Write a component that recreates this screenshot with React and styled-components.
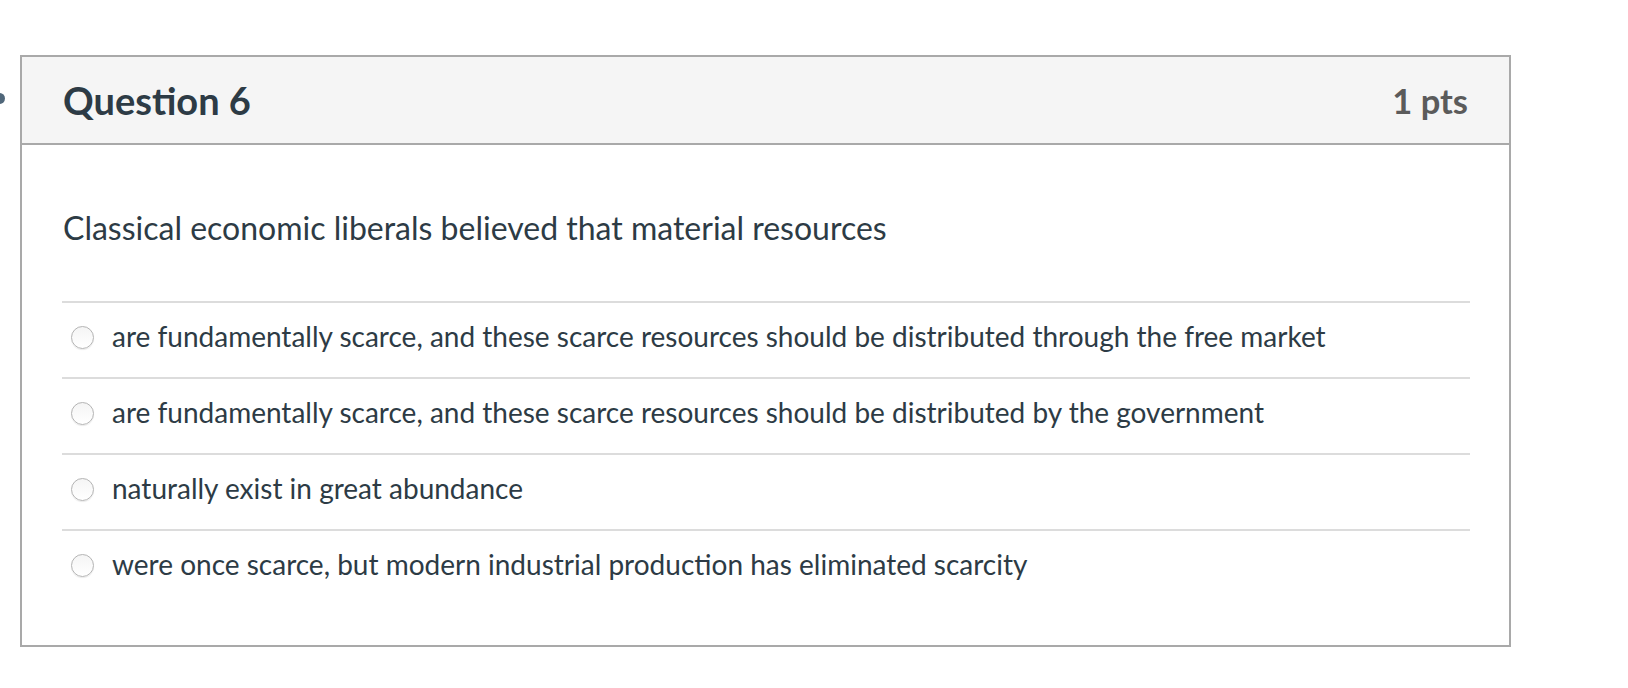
import React from 'react';
import styled, { createGlobalStyle } from 'styled-components';

const GlobalStyle = createGlobalStyle`
    body{
        margin: 0;
        background: #ffffff;
        font-family: Lato, "Open Sans", "Liberation Sans", sans-serif;
        color: #2d3b45;
    }
`;

const Page = styled.div`
    padding: 55px 0 40px 20px;
`;

const Card = styled.div`
    position: relative;
    width: 1491px;
    box-sizing: border-box;
    border: 2px solid #a9a9a9;
    background: #ffffff;
`;

const Marker = styled.span`
    position: absolute;
    left: -28px;
    top: 36px;
    width: 11px;
    height: 11px;
    border-radius: 50%;
    background: #50677a;
`;

const Header = styled.div`
    display: flex;
    align-items: center;
    justify-content: space-between;
    height: 86px;
    padding: 0 41px;
    background: #f5f5f5;
    border-bottom: 2px solid #a9a9a9;
`;

const Title = styled.h2`
    margin: 0;
    font-size: 38px;
    font-weight: 700;
    color: #2d3b45;
`;

const Points = styled.div`
    font-size: 34.5px;
    font-weight: 700;
    color: #5b5b5b;
`;

const Body = styled.div`
    padding: 61px 39px 40px 40px;
`;

const QuestionText = styled.p`
    margin: 0 0 51px 1px;
    font-size: 32px;
    line-height: 44px;
`;

const Answers = styled.div`
    display: flex;
    flex-direction: column;
`;

const Answer = styled.label`
    display: flex;
    align-items: flex-start;
    height: 74px;
    border-top: 2px solid #dcdcdc;
    font-size: 28px;
    line-height: 34px;
    cursor: pointer;
`;

const AnswerText = styled.div`
    margin-top: 16px;
`;

const Radio = styled.div`
    flex: none;
    width: 23px;
    height: 23px;
    margin: 23px 18px 0 9px;
    box-sizing: border-box;
    border-radius: 50%;
    border: 1px solid #b4b4b4;
    background: linear-gradient(#f5f5f5, #ffffff);
    box-shadow: 0 1px 1px rgba(0, 0, 0, 0.08);
`;

const answers = [
    'are fundamentally scarce, and these scarce resources should be distributed through the free market',
    'are fundamentally scarce, and these scarce resources should be distributed by the government',
    'naturally exist in great abundance',
    'were once scarce, but modern industrial production has eliminated scarcity',
];

const App = () => {
    return (
        <Page>
            <GlobalStyle />
            <Card>
                <Marker />
                <Header>
                    <Title>Question 6</Title>
                    <Points>1 pts</Points>
                </Header>
                <Body>
                    <QuestionText>Classical economic liberals believed that material resources</QuestionText>
                    <Answers>
                        {answers.map((text, i) => (
                            <Answer key={'answer_' + i}>
                                <Radio />
                                <AnswerText>{text}</AnswerText>
                            </Answer>
                        ))}
                    </Answers>
                </Body>
            </Card>
        </Page>
    );
};

export default App;
